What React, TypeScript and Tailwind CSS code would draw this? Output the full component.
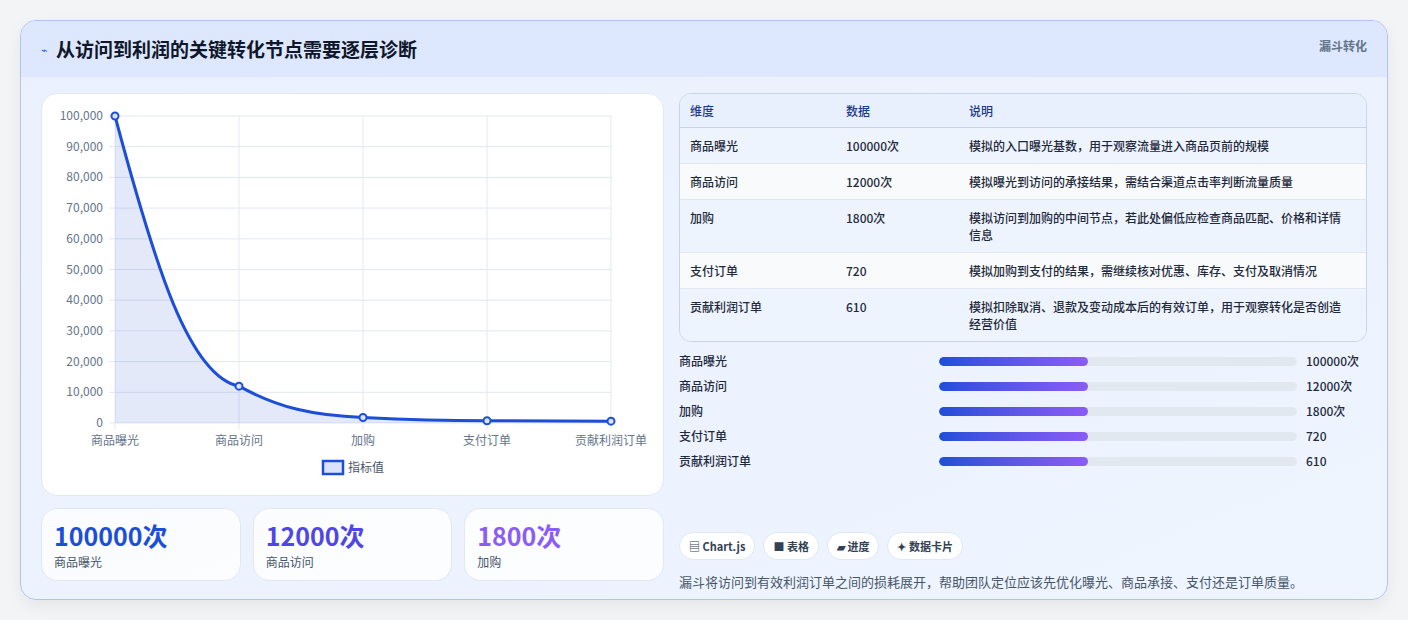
import React from "react";

const rows = [
  ["商品曝光", "100000次", "模拟的入口曝光基数，用于观察流量进入商品页前的规模"],
  ["商品访问", "12000次", "模拟曝光到访问的承接结果，需结合渠道点击率判断流量质量"],
  ["加购", "1800次", "模拟访问到加购的中间节点，若此处偏低应检查商品匹配、价格和详情信息"],
  ["支付订单", "720", "模拟加购到支付的结果，需继续核对优惠、库存、支付及取消情况"],
  ["贡献利润订单", "610", "模拟扣除取消、退款及变动成本后的有效订单，用于观察转化是否创造经营价值"],
];

function Chart() {
  const x0 = 73, x1 = 569, y0 = 22, y1 = 329;
  const xs = [0, 1, 2, 3, 4].map((i) => x0 + (i * (x1 - x0)) / 4);
  const vals = [100000, 12000, 1800, 720, 610];
  const Y = (v: number) => y1 - (v / 100000) * (y1 - y0);
  const ys = vals.map(Y);
  const line = `M${xs[0]},${ys[0]} C${xs[0] + 40},${ys[0] + 150} ${xs[1] - 50},${ys[1] - 10} ${xs[1]},${ys[1]} C${xs[1] + 40},${ys[1] + 22} ${xs[2] - 50},${ys[2] - 2} ${xs[2]},${ys[2]} C${xs[2] + 40},${ys[2] + 2} ${xs[3] - 40},${ys[3]} ${xs[3]},${ys[3]} L${xs[4]},${ys[4]}`;
  const labels = ["商品曝光", "商品访问", "加购", "支付订单", "贡献利润订单"];
  const ft = "'Noto Sans CJK SC', 'Liberation Sans', sans-serif";
  return (
    <svg width="623" height="402" className="block">
      {Array.from({ length: 11 }).map((_, i) => {
        const y = y0 + (i * (y1 - y0)) / 10;
        return (
          <g key={i}>
            <line x1={x0 - 6} x2={x1} y1={y} y2={y} stroke="#e2e8f0" />
            <text x={61} y={y + 4} textAnchor="end" fontSize="12" fill="#64748b" fontFamily={ft}>
              {(100000 - i * 10000).toLocaleString("en-US")}
            </text>
          </g>
        );
      })}
      {xs.map((x, i) => (
        <g key={i}>
          <line x1={x} x2={x} y1={y0} y2={y1 + 6} stroke="#e2e8f0" />
          <text x={x} y={351} textAnchor="middle" fontSize="12" fill="#64748b" fontFamily={ft}>{labels[i]}</text>
        </g>
      ))}
      <path d={`${line} L${x1},${y1} L${x0},${y1} Z`} fill="rgba(37,76,216,0.12)" />
      <path d={line} fill="none" stroke="#1d4ed8" strokeWidth="3" />
      {xs.map((x, i) => (
        <circle key={i} cx={x} cy={ys[i]} r="3.5" fill="#dbe3fb" stroke="#1d4ed8" strokeWidth="2" />
      ))}
      <rect x={281} y={367} width={20} height={13} fill="#dbe3fb" stroke="#1d4ed8" strokeWidth="2.5" />
      <text x={306} y={378} fontSize="12" fill="#475569" fontFamily={ft}>指标值</text>
    </svg>
  );
}

export default function App() {
  return (
    <div className="w-[1408px] h-[620px] bg-[#f3f4f6] p-5" style={{ fontFamily: "'Noto Sans CJK SC', 'Liberation Sans', sans-serif" }}>
      <div className="h-[580px] rounded-2xl border border-[#b4c3ec] overflow-hidden bg-gradient-to-br from-[#eaf0fd] to-[#eef5ff] shadow-[0_6px_16px_rgba(0,0,0,0.06)]">
        <div className="h-[56px] bg-[#dde7fd] flex items-center justify-between px-5">
          <div className="flex items-center gap-2">
            <span className="text-[#2563eb] text-[11px]">⌁</span>
            <span className="text-[19px] font-bold text-[#0f172a]">从访问到利润的关键转化节点需要逐层诊断</span>
          </div>
          <span className="text-[12px] font-semibold text-[#64748b] self-start mt-4">漏斗转化</span>
        </div>
        <div className="flex gap-[15px] px-5 pt-4">
          <div className="w-[623px] flex flex-col gap-3">
            <div className="h-[403px] bg-white rounded-2xl border border-[#e2e8f0]">
              <Chart />
            </div>
            <div className="flex gap-3">
              {[
                ["100000次", "商品曝光", "text-[#1d4ed8]"],
                ["12000次", "商品访问", "text-[#4f46e5]"],
                ["1800次", "加购", "text-[#8b5cf6]"],
              ].map(([v, l, c]) => (
                <div key={l} className="flex-1 h-[73px] bg-white/80 rounded-2xl border border-[#e2e8f0] px-3 pt-2">
                  <div className={`text-[25px] font-bold leading-[36px] ${c}`}>{v}</div>
                  <div className="text-[12px] text-[#475569]">{l}</div>
                </div>
              ))}
            </div>
          </div>
          <div className="flex-1 flex flex-col">
            <div className="rounded-xl border border-[#cbd5e1] overflow-hidden text-[12px] font-medium text-[#1e293b]">
              <div className="flex h-[34px] items-center bg-[#e8effd] border-b border-[#cbd5e1] text-[#1e3a8a]">
                <div className="w-[166px] pl-[10px]">维度</div>
                <div className="w-[123px]">数据</div>
                <div className="flex-1">说明</div>
              </div>
              {rows.map((r, i) => (
                <div key={i} className={`flex items-start py-[9px] leading-[17px] ${i % 2 ? "bg-[#f8fafc]" : "bg-[#eef4fe]"} ${i < 4 ? "border-b border-[#e2e8f0]" : ""}`}>
                  <div className="w-[166px] pl-[10px]">{r[0]}</div>
                  <div className="w-[123px]">{r[1]}</div>
                  <div className="flex-1 pr-5">{r[2]}</div>
                </div>
              ))}
            </div>
            <div className="flex flex-col mt-[10px] gap-[7px]">
              {rows.map((r) => (
                <div key={r[0]} className="flex items-center h-[18px] text-[12px] font-medium text-[#1e293b]">
                  <div className="w-[260px]">{r[0]}</div>
                  <div className="w-[358px] h-[9px] rounded-full bg-[#e2e8f0] overflow-hidden">
                    <div className="w-[149px] h-full rounded-full bg-gradient-to-r from-[#1d4ed8] to-[#8b5cf6]" />
                  </div>
                  <div className="ml-[9px]">{r[1]}</div>
                </div>
              ))}
            </div>
            <div className="flex gap-2 mt-[62px]">
              {["▤ Chart.js", "■ 表格", "▰ 进度", "✦ 数据卡片"].map((t) => (
                <span key={t} className="h-[28px] px-[9px] flex items-center rounded-full bg-white border border-[#e2e8f0] text-[11px] font-semibold text-[#334155]">{t}</span>
              ))}
            </div>
            <div className="mt-[12px] text-[13px] text-[#475569]">漏斗将访问到有效利润订单之间的损耗展开，帮助团队定位应该先优化曝光、商品承接、支付还是订单质量。</div>
          </div>
        </div>
      </div>
    </div>
  );
}
